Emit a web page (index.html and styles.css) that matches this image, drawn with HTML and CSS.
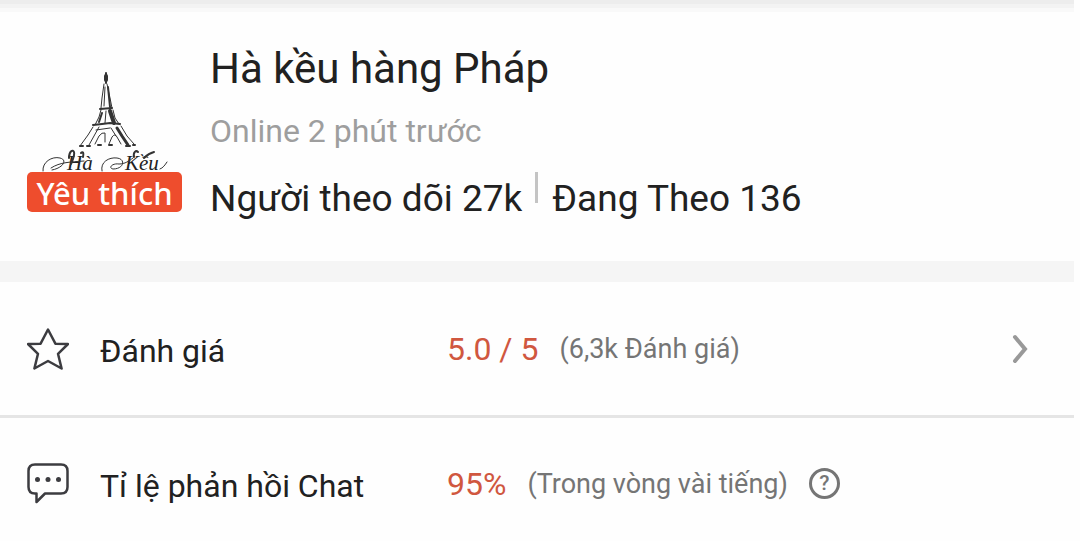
FILE: index.html
```html
<!DOCTYPE html>
<html lang="vi">
<head>
<meta charset="utf-8">
<meta name="viewport" content="width=device-width, initial-scale=1">
<title>Hà kều hàng Pháp</title>
<link rel="stylesheet" href="styles.css">
</head>
<body>

<main class="page">
<div class="top-shadow"></div>

<header class="shop">
  <div class="avatar">
    <svg class="logo" viewBox="0 0 155 112" aria-hidden="true">
      <!-- tower -->
      <g fill="none" stroke="#333" stroke-linecap="round">
        <path d="M79 13v10" stroke-width="2"/>
        <path d="M79 16v4" stroke-width="4"/>
        <path d="M77 24l-2 14-1 10M80 24l3 14 2 10M78 27l-1 19" stroke-width="1"/>
        <path d="M81 27l2 20" stroke-width="2"/>
        <path d="M73 49l12-1" stroke-width="2"/>
        <path d="M74 50l-2 7-4 8M86 50l2 8 4 6M79 51l-1 12" stroke-width="1"/>
        <path d="M83 51l4 12" stroke-width="4"/>
        <path d="M75 53l-3 9" stroke-width="2"/>
        <path d="M66 65l9-1 8-1 10 1" stroke-width="2"/>
        <path d="M66 67l-5 8-8 11M72 67l-5 9-5 9M69 70l14-2" stroke-width="1"/>
        <path d="M94 66l6 10 7 8M84 68l5 8" stroke-width="1"/>
        <path d="M90 68l5 8 6 9" stroke-width="3"/>
        <path d="M68 84l4-8q3-4 6-3v9M82 84l3-7q3-4 5 0l4 7" stroke-width="1"/>
        <path d="M53 86h3M60 86h3M71 85h3M82 85h3M99 86h4M106 85h2" stroke-width="2"/>
      </g>
      <!-- shop name with its flourishes -->
      <text class="logo-name" x="40" y="110">Hà</text>
      <text class="logo-name" x="98" y="110">Kều</text>
      <g fill="none" stroke="#333" stroke-linecap="round">
        <path d="M16 111c-1-9 9-15 17-13 8 2 3 10-8 12M24 108c9-6 20-6 33-7" stroke-width="1"/>
        <path d="M75 111c-2-9 7-14 15-13 9 1 7 11-4 11-5-1-1-6 6-5 6 0 10-3 14-6" stroke-width="1"/>
        <path d="M42 98c0-7 4-9 5-6s-1 7-3 12M56 97c1-4 0-6-2-4" stroke-width="2"/>
        <path d="M107 97c-1-5 2-7 4-5M117 98c3-3 6-5 10-6" stroke-width="2"/>
        <path d="M133 109c3-1 5-4 7-7" stroke-width="1"/>
      </g>
    </svg>
    <span class="badge">Yêu thích</span>
  </div>
  <div class="info">
    <h1>Hà kều hàng Pháp</h1>
    <p class="online">Online 2 phút trước</p>
    <p class="follow"><span>Người theo dõi 27k</span><i class="divider"></i><span>Đang Theo 136</span></p>
  </div>
</header>

<section class="stats">
  <a class="row" href="#reviews">
    <svg class="icon" viewBox="0 0 42 42" aria-hidden="true">
      <path d="M21 1.5L28.4 15.7L41 16L31 25.8L34.6 40.5L21 33L7.4 40.5L11 25.8L1 16L13.6 15.7Z"/>
    </svg>
    <span class="label">Đánh giá</span>
    <span class="detail">
      <span class="value">5.0 / 5</span>
      <span class="note">(6,3k Đánh giá)</span>
    </span>
    <svg class="arrow" viewBox="0 0 16 30" aria-hidden="true">
      <path d="M3 3l10 12L3 27"/>
    </svg>
  </a>
  <div class="row">
    <svg class="icon" viewBox="0 0 42 42" aria-hidden="true">
      <path d="M8 1.5H34Q40.500 1.500 40.500 8V24Q40.500 30.500 34 30.500H18L9.500 39V30.500H8Q1.500 30.500 1.500 24V8Q1.500 1.500 8 1.500Z"/>
      <g class="dots"><circle cx="10.500" cy="16.500" r="2.500"/><circle cx="21" cy="16.500" r="2.500"/><circle cx="31.500" cy="16.500" r="2.500"/></g>
    </svg>
    <span class="label">Tỉ lệ phản hồi Chat</span>
    <span class="detail">
      <span class="value">95%</span>
      <span class="note">(Trong vòng vài tiếng)</span>
      <button class="help" type="button" aria-label="Trợ giúp">?</button>
    </span>
  </div>
</section>
</main>

</body>
</html>
```
FILE: styles.css
```css
* {
  box-sizing: border-box;
}
body {
  margin: 0;
  background: #fefefe;
  color: #212121;
  font-family: Roboto, "Noto Sans", sans-serif;
}
.page {
  margin-right: 6px;
}
h1, p {
  margin: 0;
  font-weight: 400;
}
.top-shadow {
  height: 12px;
  background: linear-gradient(#ededed 4px, #f3f3f3 4px, #f3f3f3 8px, #f9f9f9 8px);
}

/* shop header */
.shop {
  display: flex;
  gap: 28px;
  padding: 32px 27px 33px;
}
.avatar {
  display: flex;
  flex-direction: column;
  width: 155px;
  padding-top: 16px;
}
.logo {
  display: block;
  width: 100%;
}
.logo-name {
  font: italic 21px "Liberation Serif", serif;
  fill: #222;
}
.badge {
  height: 40px;
  border-radius: 5px;
  background: #ee4d2d;
  color: #fff;
  font: 500 31px/42px "Noto Sans", sans-serif;
  text-align: center;
  white-space: nowrap;
}
.info {
  flex: 1;
}
h1 {
  font-size: 42px;
  line-height: 50px;
}
.online {
  margin-top: 18px;
  color: #9e9e9e;
  font-size: 32px;
  line-height: 38px;
}
.follow {
  display: flex;
  margin-top: 20px;
  font-size: 37px;
  line-height: 58px;
}
.divider {
  width: 3px;
  height: 31px;
  margin: 2px 14px 0 13px;
  background: #c4c4c4;
}

/* rating and chat rows */
.stats {
  border-top: 21px solid #f5f5f5;
}
.row {
  display: grid;
  grid-template-columns: 42px 316px 1fr auto;
  column-gap: 31px;
  align-items: center;
  min-height: 131px;
  padding: 0 46px 0 27px;
  color: inherit;
  text-decoration: none;
}
a.row {
  min-height: 136px;
  border-bottom: 3px solid #e5e5e5;
}
.icon {
  width: 42px;
  height: 42px;
  fill: none;
  stroke: #3c3c40;
  stroke-width: 2.500;
  stroke-linejoin: round;
}
.dots {
  fill: #3c3c40;
  stroke: none;
}
.label {
  padding-top: 4px;
  font-size: 32px;
}
.detail {
  display: flex;
  align-items: center;
  gap: 21px;
}
.value {
  color: #d0573f;
  font-size: 32px;
}
.note {
  color: #757575;
  font-size: 27px;
}
.help {
  width: 31px;
  height: 31px;
  padding: 0;
  border: 3px solid #757575;
  border-radius: 50%;
  background: none;
  color: #757575;
  font: 500 21px/25px Roboto, sans-serif;
}
.arrow {
  width: 16px;
  height: 30px;
  fill: none;
  stroke: #999;
  stroke-width: 4;
  stroke-linecap: round;
}
```
